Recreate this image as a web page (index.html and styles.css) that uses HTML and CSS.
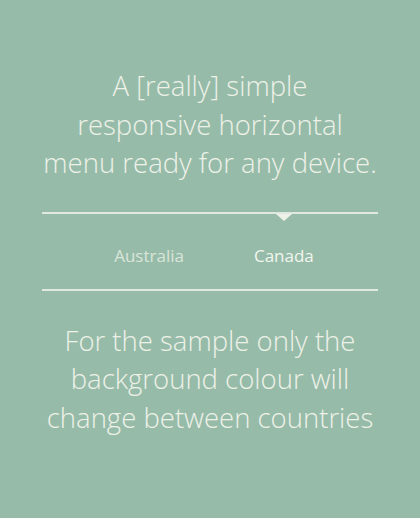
FILE: index.html
```html
<!DOCTYPE html>
<html lang="en">
<head>
    <meta charset="UTF-8">
    <meta name="viewport" content="width=device-width, initial-scale=1.0">
    <title>Simple Responsive Menu</title>
    <link rel="stylesheet" href="styles.css">
</head>
<body>
    <div class="wrapper">
        <h1 class="intro">A [really] simple<br>responsive horizontal<br>menu ready for any device.</h1>
        <nav class="menu">
            <ul>
                <li><a href="#">Australia</a></li>
                <li class="active"><a href="#">Canada</a></li>
            </ul>
        </nav>
        <p class="note">For the sample only the<br>background colour will<br>change between countries</p>
    </div>
</body>
</html>
```

FILE: styles.css
```css
body {
    margin: 0;
    background: #96bca9;
    color: #eef1e8;
    font-family: "Open Sans", Lato, sans-serif;
    font-weight: 300;
}

.wrapper {
    width: 80%;
    margin: 0 auto;
    padding-top: 67px;
    text-align: center;
}

.intro {
    margin: 0 0 29px;
    font-size: 27.5px;
    font-weight: 300;
    line-height: 38.5px;
}

.menu {
    position: relative;
    border-top: 2px solid #dfe9e2;
    border-bottom: 2px solid #dfe9e2;
}

.menu ul {
    display: flex;
    justify-content: center;
    list-style: none;
    margin: 0;
    padding: 0 0 0 8px;
}

.menu li {
    position: relative;
    padding: 0 35px;
}

.menu a {
    display: block;
    padding: 32px 0 23px;
    font-size: 17px;
    line-height: 20px;
    font-weight: 400;
    color: rgba(238, 241, 232, 0.78);
    text-decoration: none;
}

.menu li.active a {
    color: #f3f5ee;
}

/* small arrow under the top rule marks the current country */
.menu li.active::before {
    content: "";
    position: absolute;
    top: 0;
    left: 50%;
    margin-left: -8px;
    border-left: 8px solid transparent;
    border-right: 8px solid transparent;
    border-top: 7px solid #eef1e8;
}

.note {
    margin: 31px 0 0;
    font-size: 27.5px;
    line-height: 38.5px;
}
```
